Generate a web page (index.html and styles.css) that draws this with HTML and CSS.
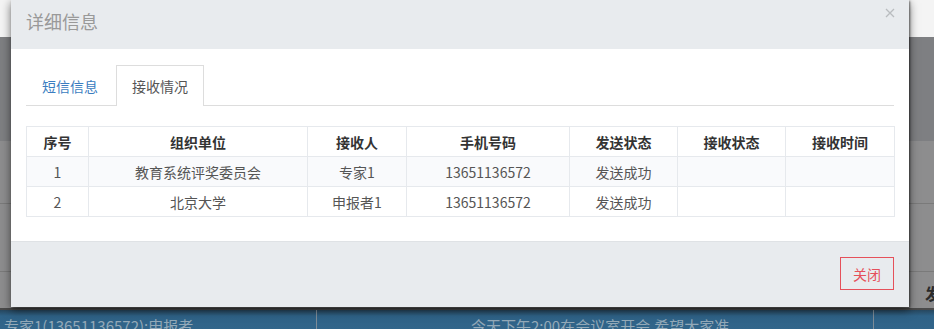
FILE: index.html
```html
<!DOCTYPE html>
<html lang="zh-CN">
<head>
<meta charset="utf-8">
<link rel="stylesheet" href="styles.css">
</head>
<body>
<div class="page">
  <div class="topbar"></div>
  <div class="content">
    <div class="band"></div>
    <div class="row r1"></div>
    <div class="row r2"><span class="peek">发</span></div>
  </div>
  <div class="ticker">
    <div class="tk tk1">专家1(13651136572):申报者</div>
    <div class="tk tk2">今天下午2:00在会议室开会,希望大家准</div>
    <div class="tk tk3"></div>
  </div>
</div>

<div class="modal">
  <div class="modal-header">
    <h4 class="modal-title">详细信息</h4>
    <span class="close"><svg width="10" height="10" viewBox="0 0 10 10"><path d="M1 1L9 9M9 1L1 9" stroke="#b9bcbf" stroke-width="1.3"/></svg></span>
  </div>
  <div class="modal-body">
    <ul class="tabs">
      <li class="tab"><a>短信信息</a></li>
      <li class="tab active"><a>接收情况</a></li>
    </ul>
    <table class="grid">
      <colgroup>
        <col class="c1"><col class="c2"><col class="c3"><col class="c4"><col class="c5"><col class="c6"><col class="c7">
      </colgroup>
      <thead>
        <tr><th>序号</th><th>组织单位</th><th>接收人</th><th>手机号码</th><th>发送状态</th><th>接收状态</th><th>接收时间</th></tr>
      </thead>
      <tbody>
        <tr class="odd"><td>1</td><td>教育系统评奖委员会</td><td>专家1</td><td>13651136572</td><td>发送成功</td><td></td><td></td></tr>
        <tr><td>2</td><td>北京大学</td><td>申报者1</td><td>13651136572</td><td>发送成功</td><td></td><td></td></tr>
      </tbody>
    </table>
  </div>
  <div class="modal-footer">
    <button class="btn-close">关闭</button>
  </div>
</div>
</body>
</html>
```

FILE: styles.css
```css
* { box-sizing: border-box; }
html, body { margin: 0; padding: 0; }
body {
  width: 934px;
  height: 329px;
  overflow: hidden;
  font-family: "Noto Sans CJK SC", "Noto Sans", sans-serif;
  background: #8c8c8d;
  position: relative;
}
.page {
  display: flex;
  flex-direction: column;
  height: 329px;
}
.topbar {
  height: 37px;
  background: #f4f4f4;
  flex: none;
}
.content {
  flex: none;
  height: 271px;
  background: #8d8d8e;
  display: flex;
  flex-direction: column;
}
.band {
  height: 104px;
  background: #7e7f82;
}
.row {
  border-top: 1px solid #7a7a7a;
}
.r1 { margin-top: 62px; height: 68px; }
.r2 { height: 37px; position: relative; }
.peek {
  position: absolute;
  left: 925px;
  top: 9px;
  font-size: 16px;
  font-weight: bold;
  color: #2a2a2a;
}
.ticker {
  flex: none;
  height: 21px;
  background: linear-gradient(#27475f, #2f6287 6px, #31658a);
  border-top: 2px solid #4a4a4a;
  display: flex;
  color: #93a9b8;
  font-size: 15px;
  white-space: nowrap;
  overflow: hidden;
}
.tk { padding-top: 5px; }
.tk1 { width: 317px; padding-left: 4px; border-right: 1px solid #7d8c98; }
.tk2 { width: 557px; padding-left: 154px; border-right: 1px solid #7d8c98; }
.tk3 { flex: 1; }

.modal {
  position: absolute;
  left: 11px;
  top: 0;
  width: 898px;
  height: 307px;
  background: #fff;
  box-shadow: 0 3px 9px rgba(0,0,0,0.55), 1px 1px 2px rgba(0,0,0,0.5);
  display: flex;
  flex-direction: column;
}
.modal-header {
  height: 49px;
  background: #e8ebee;
  position: relative;
  padding: 8px 15px 0;
}
.modal-title {
  margin: 0;
  font-size: 18px;
  font-weight: normal;
  line-height: 26px;
  color: #999;
}
.close {
  position: absolute;
  right: 14px;
  top: 8px;
  line-height: 0;
}
.modal-body {
  flex: 1;
  padding: 16px 15px 0;
}
.tabs {
  list-style: none;
  margin: 0 0 20px;
  padding: 0;
  display: flex;
  border-bottom: 1px solid #ddd;
  height: 41px;
}
.tab { margin-right: 2px; }
.tab a {
  display: block;
  height: 41px;
  line-height: 40px;
  padding: 0 15px;
  font-size: 14px;
  color: #3b7dc0;
  border: 1px solid transparent;
  border-bottom: none;
}
.tab.active a {
  color: #555;
  background: #fff;
  border-color: #ddd;
}
.grid {
  width: 868px;
  border-collapse: collapse;
  table-layout: fixed;
  font-size: 14px;
}
.c1 { width: 62px; }
.c2 { width: 219px; }
.c3 { width: 99px; }
.c4 { width: 163px; }
.c5 { width: 108px; }
.c6 { width: 108px; }
.c7 { width: 109px; }
.grid th, .grid td {
  border: 1px solid #e6e9ed;
  height: 30px;
  padding: 0;
  text-align: center;
  vertical-align: middle;
  line-height: 28px;
}
.grid th {
  color: #333;
  font-weight: bold;
}
.grid td { color: #555; }
.grid tr.odd td { background: #f9fafc; }
.modal-footer {
  height: 66px;
  background: #e8ebee;
  border-top: 1px solid #dfe2e5;
  display: flex;
  justify-content: flex-end;
  align-items: flex-start;
  padding: 15px 15px 0;
}
.btn-close {
  width: 54px;
  height: 33px;
  background: transparent;
  border: 1px solid #e5505a;
  color: #e5505a;
  font-family: inherit;
  font-size: 14px;
  padding: 0;
  border-radius: 0;
}
```
